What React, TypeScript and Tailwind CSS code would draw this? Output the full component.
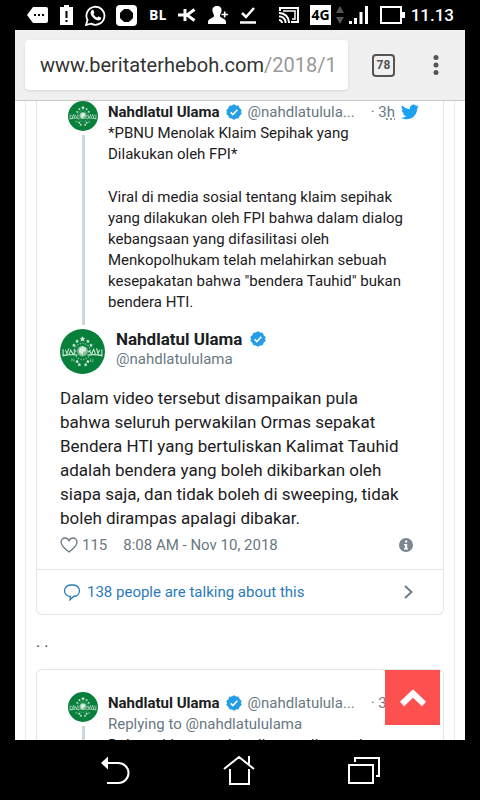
import type { ReactNode } from "react";

const stars = [
  [50, 22, 5],
  [38, 27, 3],
  [62, 27, 3],
  [31, 36, 3],
  [69, 36, 3],
  [38, 72, 3],
  [62, 72, 3],
  [43, 79, 3],
  [57, 79, 3],
];

function Avatar({ className }: { className: string }) {
  return (
    <svg viewBox="0 0 100 100" className={className} role="img" aria-label="Nahdlatul Ulama">
      <circle cx="50" cy="50" r="50" fill="#08803c" />
      <circle cx="50" cy="50" r="18" fill="none" stroke="#7dbb94" strokeWidth="3" strokeDasharray="3 3" />
      <circle cx="50" cy="49" r="12" fill="#86c09b" />
      <path d="M42 45l7-6 8 3 1 7-6 2-2 7-7-5z" fill="#d8eedf" />
      <path
        d="M7 45v12q4 3 8-1l5-13M12 46l3 7M20 57l4-10 5 9 5-5M5 60q20-5 34-2M93 45v12q-4 3-8-1l-4-13M88 46l-3 7M79 57l-4-12-5 11-5-9M95 60q-20-5-34-2M30 46l6 4M66 48l-4 4"
        fill="none"
        stroke="#c3e2cd"
        strokeWidth="2.500"
      />
      <path d="M26 72v-6l5 6v-6M68 66v6h5v-6" fill="none" stroke="#86c09b" strokeWidth="1.800" />
      {stars.map(([x, y, r]) => (
        <path
          key={`${x}-${y}`}
          d={`M${x} ${y - r}l${r * 0.3} ${r * 0.7} ${r * 0.7} 0-${r * 0.5} ${r * 0.5} ${r * 0.2} ${r * 0.8}-${r * 0.7}-${r * 0.4}-${r * 0.7} ${r * 0.4} ${r * 0.2}-${r * 0.8}-${r * 0.5}-${r * 0.5} ${r * 0.7} 0z`}
          fill="#e6f5ea"
          stroke="#e6f5ea"
        />
      ))}
    </svg>
  );
}

function Verified({ className }: { className: string }) {
  return (
    <svg viewBox="0 0 24 24" className={className} role="img" aria-label="Verified">
      <path
        d="M12 1l3 2 3.700.2 1.100 3.500 3 2.200L21.700 12l1.100 3.100-3 2.200-1.100 3.500-3.700.2-3 2-3-2-3.700-.2-1.100-3.500-3-2.200L2.300 12 1.200 8.900l3-2.200 1.100-3.500L9 3z"
        fill="#249de8"
        stroke="#249de8"
        strokeWidth="1.5"
        strokeLinejoin="round"
      />
      <path d="M7 12.500l3.400 3.300L17 8.700" fill="none" stroke="#fff" strokeWidth="2.400" />
    </svg>
  );
}

function StatusBar() {
  return (
    <header className="flex h-[30px] shrink-0 items-center justify-between bg-black pr-[26px] pl-[27px] text-white">
      <div className="flex items-center gap-3">
        <svg viewBox="0 0 21 16" className="h-4 w-[21px]">
          <path d="M6 0h13a2 2 0 0 1 2 2v12a2 2 0 0 1-2 2H6L0 8z" fill="#fff" />
          <path d="M7 7h2v2H7zM11 7h2v2h-2zM15 7h2v2h-2z" fill="#000" />
        </svg>
        <svg viewBox="0 0 13 20" className="h-5 w-[13px]">
          <path d="M0 2h4V0h5v2h4v18H0z" fill="#fff" />
          <path d="M5.500 6h2v7h-2zM5.500 15h2v2h-2z" fill="#000" />
        </svg>
        <div className="flex items-center gap-[10px]">
          <svg viewBox="0 0 21 21" className="size-[21px]">
            <path d="M1 20l1.500-5A9 9 0 1 1 6 18.600z" fill="none" stroke="#fff" strokeWidth="1.800" />
            <path
              d="M6.500 5.500c1-1 1.800-.7 2.100.1l.7 1.800c.2.700-.8 1.200-.9 1.600.8 1.700 2 2.900 3.800 3.600.5-.1 1-1.500 1.600-1.200l2 1c.7.400.4 1.800-.4 2.400-1.700 1.300-4 .5-6.100-1C7 12 5.600 9.800 5.500 7.800c0-.9.400-1.700 1-2.300z"
              fill="#fff"
            />
          </svg>
          <svg viewBox="0 0 21 21" className="size-[21px]">
            <rect width="21" height="21" rx="4" fill="#fff" />
            <path d="M8 4.500h5l3.500 3.500v5L13 16.500H8L4.500 13V8z" fill="#000" stroke="#000" strokeLinejoin="round" />
          </svg>
        </div>
        <span className="font-['Open_Sans'] text-sm leading-5 font-bold">BL</span>
        <svg viewBox="0 0 18 14" className="h-[14px] w-[18px]">
          <path d="M0 7h9M7 1v12M16.500 1.500L9 7l7.500 5.500" fill="none" stroke="#fff" strokeWidth="3" />
        </svg>
        <svg viewBox="0 0 20 18" className="h-[18px] w-5">
          <path
            d="M9 0c3 0 5 2 4.500 5-.3 2.500-1.500 3.300-1.500 5 0 2 6 2.500 6 6v2H0v-2c0-3.500 6-4 6-6 0-1.700-1.200-2.500-1.500-5C4 2 6 0 9 0z"
            fill="#fff"
          />
          <path d="M13.500 8.500H20M16.700 5.500v6" stroke="#fff" strokeWidth="1.700" />
        </svg>
        <svg viewBox="0 0 16 17" className="h-[17px] w-4">
          <path d="M2 6l4 4 8-9" fill="none" stroke="#fff" strokeWidth="2.500" />
          <path d="M0 15.500h16" stroke="#fff" strokeWidth="2.500" />
        </svg>
      </div>
      <div className="flex items-center gap-[11px]">
        <svg viewBox="0 0 20 16" className="h-4 w-5" fill="none" stroke="#fff">
          <path d="M1 4V1h18v14h-7" strokeWidth="2" />
          <path d="M4 4h12v8h-3" strokeWidth="1.500" />
          <path d="M0 6a9.500 9.500 0 0 1 10 10M0 9.500A6 6 0 0 1 6.500 16M0 13a3 3 0 0 1 3 3" strokeWidth="1.900" />
        </svg>
        <div className="flex items-center gap-[5px]">
          <span className="bg-white px-px font-['Open_Sans'] text-sm leading-5 font-bold text-black">4G</span>
          <svg viewBox="0 0 8 20" className="h-5 w-2" fill="#555">
            <path d="M4 1l4 7H0zM4 19l4-7H0z" />
          </svg>
          <svg viewBox="0 0 20 18" className="h-[18px] w-5" fill="#fff">
            <path d="M0 15h3v3H0zM5 12h3v6H5zM10.500 6h3v12h-3zM16 0h3v18h-3z" />
          </svg>
        </div>
        <div className="flex items-center gap-[6px]">
          <svg viewBox="0 0 25 18" className="h-[18px] w-[25px]">
            <path d="M1 1h20v16H1z" fill="none" stroke="#fff" strokeWidth="2" />
            <path d="M22 6h3v6h-3z" fill="#fff" />
          </svg>
          <time className="text-[17px] leading-5 font-medium">11.13</time>
        </div>
      </div>
    </header>
  );
}

function BrowserBar() {
  return (
    <div className="flex h-[71px] shrink-0 items-center border-b border-[#c8c8c8] bg-[#f0f0f0] pr-6 pl-[10px]">
      <div className="relative min-w-0 flex-1">
        <input
          aria-label="Address"
          readOnly
          value="www.beritaterheboh.com/2018/1"
          className="h-[50px] w-full rounded-sm bg-white pr-3 pl-[15px] text-xl text-transparent shadow outline-none"
        />
        <div className="pointer-events-none absolute inset-y-0 left-[15px] flex items-center text-xl text-[#333]">
          www.beritaterheboh.com<span className="text-[#999]">/2018/1</span>
        </div>
      </div>
      <button
        aria-label="78 open tabs"
        className="mx-6 flex size-[23px] items-center justify-center rounded-sm border-2 border-[#555] text-xs font-bold text-[#555]"
      >
        78
      </button>
      <button aria-label="Menu" className="ml-3 flex w-[10px] justify-center">
        <svg viewBox="0 0 6 20" className="h-5 w-[6px]" fill="#555">
          <circle cx="3" cy="2.500" r="2.500" />
          <circle cx="3" cy="10" r="2.500" />
          <circle cx="3" cy="17.500" r="2.500" />
        </svg>
      </button>
    </div>
  );
}

function ParentTweet({ bird, children }: { bird?: boolean; children: ReactNode }) {
  return (
    <article className="flex gap-[10px] pr-[22px] pl-[31px]">
      <div className="flex w-[30px] shrink-0 flex-col items-center gap-1">
        <Avatar className="size-[30px] shrink-0" />
        <div className="w-[3px] flex-1 bg-[#ccd6dd]" />
      </div>
      <div className="min-w-0 flex-1">
        <div className="flex h-[22px] items-center text-[15px] whitespace-nowrap text-[#697882]">
          <a href="#" className="font-bold text-[#1c2022]">
            Nahdlatul Ulama
          </a>
          <Verified className="mx-[6px] size-4 shrink-0" />
          <a href="#">@nahdlatulula...</a>
          <span className="ml-auto">
            · 3<span className="underline decoration-dotted underline-offset-2">h</span>
          </span>
          <div className="ml-[6px] w-5 shrink-0">
            {bird && (
              <svg viewBox="0 0 24 24" className="size-[18px]" fill="#1da1f2">
                <path d="M23.950 4.600a10 10 0 0 1-2.820.8 4.900 4.900 0 0 0 2.160-2.700c-.95.550-2 .950-3.130 1.200a4.900 4.900 0 0 0-8.380 4.500C7.700 8.100 4.100 6.100 1.670 3.100a4.900 4.900 0 0 0 1.520 6.600 4.900 4.900 0 0 1-2.230-.6v.050a4.900 4.900 0 0 0 3.950 4.800 5 5 0 0 1-2.210.100 4.900 4.900 0 0 0 4.600 3.400A9.900 9.900 0 0 1 0 19.500 14 14 0 0 0 7.550 21.700c9.050 0 14-7.500 14-14l-.02-.6a10 10 0 0 0 2.420-2.500z" />
              </svg>
            )}
          </div>
        </div>
        {children}
      </div>
    </article>
  );
}

export default function App() {
  return (
    <div className="flex h-screen flex-col overflow-hidden bg-black font-[Roboto,sans-serif]">
      <StatusBar />
      <div className="relative mx-[15px] flex min-h-0 flex-1 flex-col overflow-hidden bg-white">
        <BrowserBar />
        <main className="mx-[10px] min-h-0 flex-1 overflow-hidden border-x border-[#ebebeb] px-[10px]">
          <section className="rounded-b-md border border-t-0 border-[#e1e8ed]">
            <ParentTweet bird>
              <div className="pb-3 text-[15px] leading-[21px] text-[#1c2022]">
                <p>
                  *PBNU Menolak Klaim Sepihak yang
                  <br />
                  Dilakukan oleh FPI*
                </p>
                <p className="mt-[22px]">
                  Viral di media sosial tentang klaim sepihak
                  <br />
                  yang dilakukan oleh FPI bahwa dalam dialog
                  <br />
                  kebangsaan yang difasilitasi oleh
                  <br />
                  Menkopolhukam telah melahirkan sebuah
                  <br />
                  kesepakatan bahwa "bendera Tauhid" bukan
                  <br />
                  bendera HTI.
                </p>
              </div>
            </ParentTweet>

            <article className="pr-[22px] pl-[23px]">
              <div className="flex items-start gap-[11px] pt-1">
                <Avatar className="size-[45px] shrink-0" />
                <div className="leading-5">
                  <div className="flex items-center gap-2">
                    <a href="#" className="text-[17px] leading-5 font-bold text-[#1c2022]">
                      Nahdlatul Ulama
                    </a>
                    <Verified className="size-4" />
                  </div>
                  <a href="#" className="block text-[15px] leading-5 text-[#697882]">
                    @nahdlatululama
                  </a>
                </div>
              </div>
              <p className="mt-3 text-[17px] leading-6 text-[#1c2022]">
                Dalam video tersebut disampaikan pula
                <br />
                bahwa seluruh perwakilan Ormas sepakat
                <br />
                Bendera HTI yang bertuliskan Kalimat Tauhid
                <br />
                adalah bendera yang boleh dikibarkan oleh
                <br />
                siapa saja, dan tidak boleh di sweeping, tidak
                <br />
                boleh dirampas apalagi dibakar.
              </p>
              <div className="flex h-[30px] items-center pr-[8px] text-[15px] text-[#697882]">
                <button className="flex items-center gap-1" aria-label="115 likes">
                  <svg viewBox="0 0 18 16" className="h-4 w-[18px]" fill="none" stroke="#697882" strokeWidth="1.300">
                    <path d="M9 15C5 12 1 8.700 1 5.300 1 2.800 2.800 1 5 1c1.800 0 3.200 1 4 2.700C9.800 2 11.200 1 13 1c2.200 0 4 1.800 4 4.300C17 8.700 13 12 9 15z" />
                  </svg>
                  115
                </button>
                <a href="#" className="ml-4 flex-1">
                  8:08 AM - Nov 10, 2018
                </a>
                <button aria-label="Twitter Ads info and privacy">
                  <svg viewBox="0 0 14 14" className="size-[14px]">
                    <circle cx="7" cy="7" r="7" fill="#7a8790" />
                    <path d="M6 2.500h2.200v2H6zM5 6h3.200v4H9v1.500H5V10h1V7.500H5z" fill="#fff" />
                  </svg>
                </button>
              </div>
            </article>

            <a
              href="#"
              className="mt-[9px] flex h-[45px] items-center border-t border-[#e1e8ed] pr-[30px] pl-[26px] text-[15px] text-[#2b7bb9]"
            >
              <svg viewBox="0 0 18 18" className="mr-[6px] size-[18px]" fill="none" stroke="#2b7bb9" strokeWidth="1.300">
                <path d="M7.500 13.500C4 13.500 1.500 11 1.500 7.800S4 2 7.500 2h3C14 2 16.500 4.600 16.500 7.800c0 3-2.500 5.500-6 5.700L7 16.800z" />
              </svg>
              <span className="flex-1">138 people are talking about this</span>
              <svg viewBox="0 0 9 14" className="h-[14px] w-[9px]" fill="none" stroke="#697882" strokeWidth="1.800">
                <path d="M1 1l6.500 6L1 13" />
              </svg>
            </a>
          </section>

          <p className="my-[15px] text-base leading-6 text-[#444]">. .</p>

          <section className="rounded-t-md border border-b-0 border-[#e1e8ed] pt-[22px]">
            <ParentTweet>
              <p className="text-[15px] leading-[21px] text-[#697882]">Replying to @nahdlatululama</p>
              <p className="text-[15px] leading-[21px] whitespace-nowrap text-[#1c2022]">
                Dalam video tersebut disampaikan pula
              </p>
            </ParentTweet>
          </section>
        </main>
        <button
          aria-label="Back to top"
          className="absolute right-[25px] bottom-[15px] flex size-[55px] items-center justify-center bg-[#ff5050]"
        >
          <svg viewBox="0 0 28 18" className="h-[18px] w-7" fill="none" stroke="#fff" strokeWidth="6">
            <path d="M3 15L14 4.500 25 15" />
          </svg>
        </button>
      </div>

      <nav className="flex h-[60px] shrink-0 items-center justify-between px-[100px]">
        <button aria-label="Back">
          <svg viewBox="0 0 30 28" className="h-7 w-[30px]" fill="none" stroke="#fff" strokeWidth="2">
            <path d="M6 7h12.500a10 10 0 0 1 0 20H7" />
            <path d="M1 7l7-6.500v13z" fill="#fff" stroke="none" />
          </svg>
        </button>
        <button aria-label="Home">
          <svg viewBox="0 0 32 30" className="h-[30px] w-8" fill="none" stroke="#fff" strokeWidth="2">
            <path d="M1 14L16 2l15 12M7 14v15h19V14M26 9V1" />
          </svg>
        </button>
        <button aria-label="Recent apps">
          <svg viewBox="0 0 32 27" className="h-[27px] w-8" fill="none" stroke="#fff" strokeWidth="2">
            <path d="M1 8h24v18H1zM7 5V1h24v18h-3" />
          </svg>
        </button>
      </nav>
    </div>
  );
}
